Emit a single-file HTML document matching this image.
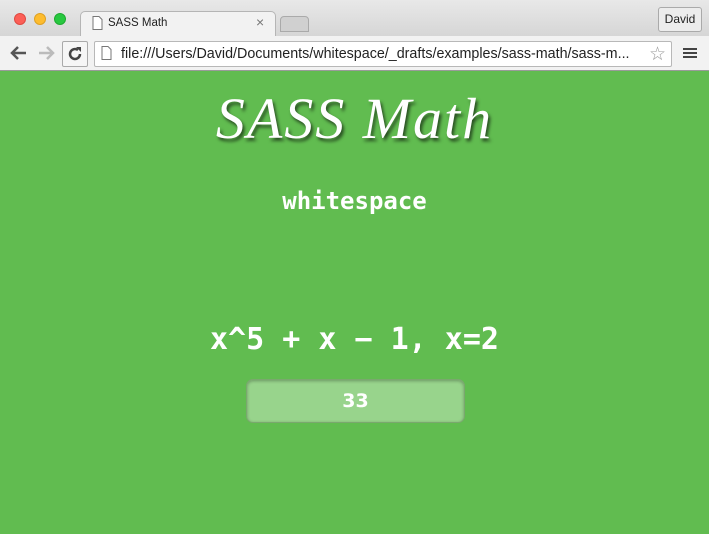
<!DOCTYPE html>
<html><head><style>
*{margin:0;padding:0;box-sizing:border-box}
body{width:709px;height:534px;overflow:hidden;background:#61bc50;font-family:"Liberation Sans",sans-serif;position:relative}
.top{position:absolute;left:0;top:0;width:709px;height:36px;background:linear-gradient(#e8e8e8,#d6d6d6);}
.dot{position:absolute;top:13px;width:12px;height:12px;border-radius:50%}
.tab{position:absolute;left:80px;top:11px;width:196px;height:26px;background:#f2f2f2;border:1px solid #b5b5b5;border-bottom:none;border-radius:5px 5px 0 0;}
.tb{position:absolute;left:0;top:36px;width:709px;height:35px;background:#f2f2f2;border-bottom:1px solid #9a9a9a}
.url{position:absolute;left:94px;top:41px;width:578px;height:26px;background:#fff;border:1px solid #b8b8b8;border-radius:2px;font-size:14.3px;color:#222;padding:4px 0 0 26px;white-space:nowrap;overflow:hidden}
h1{position:absolute;top:85px;left:0;width:709px;text-align:center;font-family:"Liberation Serif",serif;font-style:italic;font-weight:normal;font-size:58px;letter-spacing:2px;color:#fff;text-shadow:2px 3px 3px rgba(0,0,0,.6)}
.ws{position:absolute;top:187px;width:709px;text-align:center;font-family:"DejaVu Sans Mono",monospace;font-weight:bold;font-size:24px;color:#fff}
.eq{position:absolute;top:322px;width:709px;text-align:center;font-family:"DejaVu Sans Mono",monospace;font-weight:bold;font-size:30px;color:#fff}
.box{position:absolute;left:246px;top:379px;width:219px;height:44px;background:#98d48c;border:1px solid #7aa86e;border-radius:7px;box-shadow:inset 0 1px 3px rgba(0,0,0,.3);text-align:center;color:#fff;font-family:"DejaVu Sans",sans-serif;font-weight:bold;font-size:19px;line-height:42px}
</style></head><body>
<div class="top"></div>
<div class="dot" style="left:14px;background:#fc5f57;border:1px solid #de4a42"></div>
<div class="dot" style="left:34px;background:#fdbc2e;border:1px solid #dea123"></div>
<div class="dot" style="left:54px;background:#28c840;border:1px solid #1eaa30"></div>
<div class="tab"></div>
<svg style="position:absolute;left:92px;top:16px" width="11" height="14"><path d="M1 .5h6l3 3v10H1z" fill="#fff" stroke="#777"/></svg>
<div style="position:absolute;left:108px;top:17px;font-size:11.5px;color:#222">SASS Math</div>
<div style="position:absolute;left:256px;top:14px;font-size:14px;color:#777">×</div>
<div style="position:absolute;left:280px;top:16px;width:29px;height:16px;background:#d0d0d0;border:1px solid #aaa;border-radius:4px 4px 0 0"></div>
<div style="position:absolute;left:658px;top:7px;width:44px;height:25px;border:1px solid #aaa;border-radius:3px;background:#ececec;font-size:12px;text-align:center;line-height:23px;color:#222">David</div>
<div class="tb"></div>
<svg style="position:absolute;left:10px;top:45px" width="18" height="16"><path d="M2 8h14M8 2L2 8l6 6" stroke="#555" stroke-width="2.5" fill="none"/></svg>
<svg style="position:absolute;left:37px;top:45px" width="18" height="16"><path d="M2 8h14M10 2l6 6-6 6" stroke="#bbb" stroke-width="2.5" fill="none"/></svg>
<div style="position:absolute;left:62px;top:41px;width:26px;height:26px;border:1px solid #aaa;border-radius:2px;background:#f6f6f6"></div>
<svg style="position:absolute;left:67px;top:46px" width="16" height="16"><path d="M13 8a5 5 0 1 1-2-4" stroke="#444" stroke-width="2.5" fill="none"/><path d="M9 1h5v5z" fill="#444"/></svg>
<div class="url">file:///Users/David/Documents/whitespace/_drafts/examples/sass-math/sass-m...</div>
<svg style="position:absolute;left:101px;top:46px" width="11" height="14"><path d="M1 .5h6l3 3v10H1z" fill="#fff" stroke="#777"/></svg>
<div style="position:absolute;left:649px;top:43px;font-size:19px;color:#999">☆</div>
<svg style="position:absolute;left:683px;top:47px" width="14" height="12"><path d="M0 2h14M0 6h14M0 10h14" stroke="#444" stroke-width="2"/></svg>
<h1>SASS Math</h1>
<div class="ws">whitespace</div>
<div class="eq">x^5 + x − 1, x=2</div>
<div class="box">33</div>
</body></html>
